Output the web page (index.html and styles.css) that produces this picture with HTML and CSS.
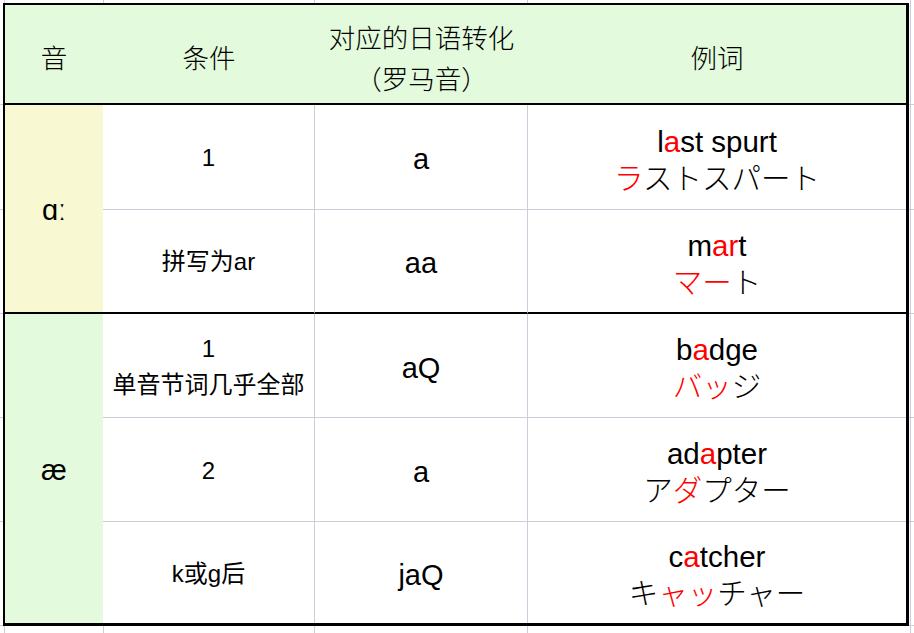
FILE: index.html
```html
<!DOCTYPE html>
<html lang="zh">
<head>
<meta charset="utf-8">
<title>音 对应表</title>
<link rel="stylesheet" href="styles.css">
</head>
<body>
<div class="sheet">
  <div class="cell head">音</div>
  <div class="cell head">条件</div>
  <div class="cell head two"><span>对应的日语转化</span><span>（罗马音）</span></div>
  <div class="cell head">例词</div>

  <div class="cell sound yellow g1">ɑː</div>
  <div class="cell cond">1</div>
  <div class="cell roma">a</div>
  <div class="cell ex"><span class="en">l<b>a</b>st spurt</span><span class="ja"><b>ラ</b>ストスパート</span></div>

  <div class="cell cond end">拼写为ar</div>
  <div class="cell roma end">aa</div>
  <div class="cell ex end"><span class="en">m<b>ar</b>t</span><span class="ja"><b>マー</b>ト</span></div>

  <div class="cell sound green g2">æ</div>
  <div class="cell cond"><span class="num">1</span><span>单音节词几乎全部</span></div>
  <div class="cell roma">aQ</div>
  <div class="cell ex"><span class="en">b<b>a</b>dge</span><span class="ja"><b>バッ</b>ジ</span></div>

  <div class="cell cond">2</div>
  <div class="cell roma">a</div>
  <div class="cell ex"><span class="en">ad<b>a</b>pter</span><span class="ja">ア<b>ダ</b>プター</span></div>

  <div class="cell cond last">k或g后</div>
  <div class="cell roma last">jaQ</div>
  <div class="cell ex last"><span class="en">c<b>a</b>tcher</span><span class="ja">キ<b>ャッ</b>チャー</span></div>
</div>
</body>
</html>
```

FILE: styles.css
```css
html, body {
  margin: 0;
  height: 100%;
}
body {
  padding: 3px 0 0 3px;
  box-sizing: border-box;
  overflow: hidden;
  background-color: #fff;
  background-image:
    linear-gradient(#c9cedb, #c9cedb),
    linear-gradient(#c9cedb, #c9cedb),
    linear-gradient(#c9cedb, #c9cedb),
    linear-gradient(#c9cedb, #c9cedb),
    linear-gradient(#c9cedb, #c9cedb),
    linear-gradient(#c9cedb, #c9cedb),
    linear-gradient(#c9cedb, #c9cedb),
    linear-gradient(#c9cedb, #c9cedb),
    linear-gradient(#c9cedb, #c9cedb),
    linear-gradient(#c9cedb, #c9cedb),
    linear-gradient(#c9cedb, #c9cedb);
  background-repeat: no-repeat;
  background-size: 1px 100%, 1px 100%, 1px 100%, 1px 100%, 1px 100%,
    100% 1px, 100% 1px, 100% 1px, 100% 1px, 100% 1px, 100% 1px;
  background-position: 4px 0, 103px 0, 314px 0, 527px 0, 910px 0,
    0 104px, 0 209px, 0 313px, 0 417px, 0 521px, 0 625px;
  font-family: "Liberation Sans", "Noto Sans CJK SC", sans-serif;
  color: #000;
}
.sheet {
  width: 906px;
  box-sizing: border-box;
  border-style: solid;
  border-color: #000;
  border-width: 2px 3px 3px 2px;
  background: #fff;
  display: grid;
  grid-template-columns: 98px 212px 213px 378px;
  grid-template-rows: 100px 105px 104px 104px 104px 101px;
}
.cell {
  box-sizing: border-box;
  display: flex;
  flex-direction: column;
  align-items: center;
  justify-content: center;
  text-align: center;
  background: #fff;
}
.head {
  background: #e3fadc;
  border-bottom: 2px solid #000;
  font-family: "Noto Sans CJK SC", sans-serif;
  font-weight: 300;
  font-size: 26.5px;
  line-height: 41px;
  padding-top: 5px;
}
.sound {
  font-size: 29px;
  padding-top: 4px;
}
.yellow { background: #f8f9d3; }
.green { background: #e3fadc; }
.g1 {
  grid-row: 2 / span 2;
  border-bottom: 2px solid #000;
}
.g2 {
  grid-row: 4 / span 3;
}
.cond {
  border-right: 1px solid #c9cedb;
  border-bottom: 1px solid #c9cedb;
  font-family: "Liberation Sans", "Noto Sans CJK SC", sans-serif;
  font-size: 24px;
  line-height: 36px;
  padding-top: 2px;
}
.roma {
  border-right: 1px solid #c9cedb;
  border-bottom: 1px solid #c9cedb;
  font-size: 29px;
  line-height: 36px;
  padding-top: 4px;
}
.ex {
  border-bottom: 1px solid #c9cedb;
  font-size: 29.5px;
  line-height: 35px;
  padding-top: 3px;
}
.end { border-bottom: 2px solid #000; }
.last { border-bottom: none; }
.ex .en {
  font-family: "Liberation Sans", sans-serif;
}
.ex .ja {
  font-family: "Noto Sans CJK JP", sans-serif;
  font-weight: 300;
  font-size: 29.5px;
}
.ex b {
  font-weight: inherit;
  color: #ff0000;
}
```
